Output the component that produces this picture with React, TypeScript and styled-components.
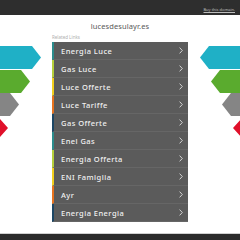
import React from "react";
import styled, { createGlobalStyle } from "styled-components";

const Global = createGlobalStyle`
  html, body { margin: 0; padding: 0; background: #fff; }
  body { font-family: "Noto Sans", "Open Sans", sans-serif; }
`;

const Page = styled.div`
  position: relative;
  min-height: 240px;
  display: flex;
  flex-direction: column;
  align-items: center;
  overflow: hidden;
`;

const TopBar = styled.div`
  align-self: stretch;
  height: 15px;
  background: #2e2e2e;
  display: flex;
  justify-content: flex-end;
  align-items: flex-end;
  padding: 0 5px 3px 0;
  box-sizing: border-box;
`;

const BuyLink = styled.a`
  font-size: 4px;
  line-height: 5px;
  color: #bdbdbd;
  text-decoration: underline;
`;

const Title = styled.h1`
  margin: 6px 0 0;
  font-size: 7.5px;
  line-height: 10px;
  font-weight: 400;
  color: #5a5a5a;
  letter-spacing: 0.1px;
`;

const Section = styled.div`
  width: 136px;
  display: flex;
  flex-direction: column;
`;

const Label = styled.div`
  margin-top: 3px;
  font-size: 4.5px;
  line-height: 6px;
  color: #b0b0b0;
`;

const List = styled.ul`
  list-style: none;
  margin: 2px 0 0;
  padding: 0;
  background: #5b5b5b;
`;

const Row = styled.li<{ $accent: string }>`
  height: 18px;
  box-sizing: border-box;
  border-left: 2px solid ${(p) => p.$accent};
  border-bottom: 1px solid #666;
  display: flex;
  align-items: center;
  justify-content: space-between;
  padding: 0 5px 0 7px;
  color: #f0f0f0;
  font-size: 7.5px;
  font-weight: 500;
  letter-spacing: 0.45px;
`;

const Footer = styled.div`
  align-self: stretch;
  margin-top: auto;
  height: 6px;
  background: #2b2b2b;
  border-top: 1px solid #d0d0d0;
`;

const Deco = styled.svg<{ $side: "left" | "right" }>`
  position: absolute;
  top: 46px;
  ${(p) => (p.$side === "left" ? "left: 0;" : "right: 0;")}
`;

const Chevron = () => (
  <svg width="4" height="7" viewBox="0 0 4 7">
    <path d="M0.6 0.6 L3.3 3.5 L0.6 6.4" fill="none" stroke="#e0e0e0" strokeWidth="0.9" />
  </svg>
);

const accents = ["#2b8c8c", "#b5cf3a", "#f2cf1d", "#e8731e", "#1d4664"];
const links = [
  "Energia Luce",
  "Gas Luce",
  "Luce Offerte",
  "Luce Tariffe",
  "Gas Offerte",
  "Enel Gas",
  "Energia Offerta",
  "ENI Famiglia",
  "Ayr",
  "Energia Energia",
];

const shapes = [
  { color: "#1fb0c6", y: 0, h: 23, tip: 41 },
  { color: "#5aab2e", y: 24, h: 23, tip: 30 },
  { color: "#858585", y: 47, h: 23, tip: 19 },
  { color: "#e0102a", y: 72, h: 20, tip: 8 },
];

const LeftArrows = () => (
  <Deco $side="left" width="42" height="92" viewBox="0 0 42 92">
    {shapes.map((s) => (
      <polygon
        key={s.color}
        fill={s.color}
        points={`0,${s.y} ${s.tip - 9},${s.y} ${s.tip},${s.y + s.h / 2} ${s.tip - 9},${s.y + s.h} 0,${s.y + s.h}`}
      />
    ))}
  </Deco>
);

const RightArrows = () => (
  <Deco $side="right" width="42" height="92" viewBox="0 0 42 92">
    {shapes.map((s) => (
      <polygon
        key={s.color}
        fill={s.color}
        points={`42,${s.y} ${42 - s.tip + 10},${s.y} ${42 - s.tip + 1},${s.y + s.h / 2} ${42 - s.tip + 10},${s.y + s.h} 42,${s.y + s.h}`}
      />
    ))}
  </Deco>
);

export default function App() {
  return (
    <Page>
      <Global />
      <TopBar>
        <BuyLink>Buy this domain.</BuyLink>
      </TopBar>
      <LeftArrows />
      <RightArrows />
      <Title>lucesdesulayr.es</Title>
      <Section>
        <Label>Related Links</Label>
        <List>
          {links.map((l, i) => (
            <Row key={l} $accent={accents[i % 5]}>
              <span>{l}</span>
              <Chevron />
            </Row>
          ))}
        </List>
      </Section>
      <Footer />
    </Page>
  );
}
